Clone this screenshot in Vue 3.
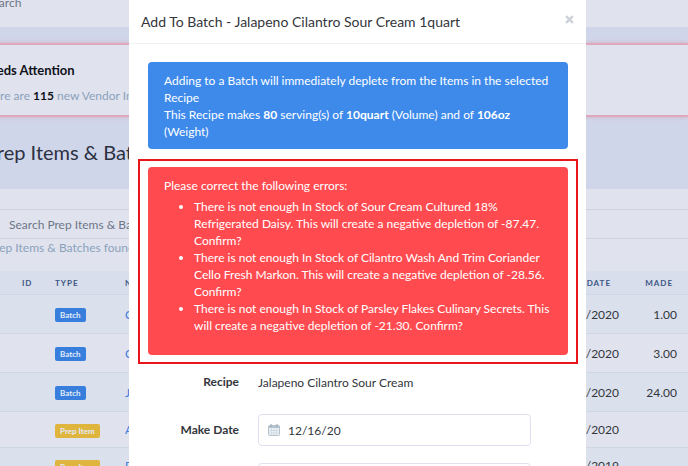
<script setup>
import { ref } from 'vue'

const search = ref('')
const makeDate = ref('12/16/20')
const quantity = ref('')

const rows = [
  { type: 'Batch', name: 'Cilantro', date: '12/14/2020', made: '1.00' },
  { type: 'Batch', name: 'Chili', date: '12/14/2020', made: '3.00' },
  { type: 'Batch', name: 'Jam', date: '12/14/2020', made: '24.00' },
  { type: 'Prep Item', name: 'Aioli', date: '12/17/2020', made: '' },
  { type: 'Prep Item', name: 'Rice', date: '12/17/2019', made: '' },
]

const errors = [
  'There is not enough In Stock of Sour Cream Cultured 18% Refrigerated Daisy. This will create a negative depletion of -87.47. Confirm?',
  'There is not enough In Stock of Cilantro Wash And Trim Coriander Cello Fresh Markon. This will create a negative depletion of -28.56. Confirm?',
  'There is not enough In Stock of Parsley Flakes Culinary Secrets. This will create a negative depletion of -21.30. Confirm?',
]
</script>

<template>
  <div class="screen">
    <main class="page">
      <div class="topbar">Search</div>
      <section class="attention">
        <h2>Needs Attention</h2>
        <p>There are <b>115</b> new Vendor Inv</p>
      </section>
      <h1>Prep Items &amp; Batches</h1>
      <section class="card">
        <div class="searchbar">
          <svg class="glass" viewBox="0 0 12 12" aria-hidden="true">
            <circle cx="5" cy="5" r="4" />
            <path d="M8 8l3 3" />
          </svg>
          <input v-model="search" type="text" aria-label="Search Prep Items" placeholder="Search Prep Items &amp; Batches" />
        </div>
        <p class="count">Prep Items &amp; Batches found</p>
        <table>
          <colgroup>
            <col class="c-id" />
            <col class="c-type" />
            <col />
            <col class="c-date" />
            <col class="c-made" />
          </colgroup>
          <thead>
            <tr>
              <th class="id">ID</th>
              <th>TYPE</th>
              <th>NAME</th>
              <th class="num">DATE</th>
              <th class="num">MADE</th>
            </tr>
          </thead>
          <tbody>
            <tr v-for="(row, i) in rows" :key="i" :class="{ item: row.type !== 'Batch' }">
              <td></td>
              <td><span class="badge">{{ row.type }}</span></td>
              <td><a href="#">{{ row.name }}</a></td>
              <td class="num">{{ row.date }}</td>
              <td class="num">{{ row.made }}</td>
            </tr>
          </tbody>
        </table>
      </section>
    </main>

    <div class="overlay">
      <div class="modal" role="dialog" aria-labelledby="title">
        <header>
          <h3 id="title">Add To Batch - Jalapeno Cilantro Sour Cream 1quart</h3>
          <button type="button" class="close" aria-label="Close">
            <svg viewBox="0 0 8 8"><path d="M1 1l6 6M7 1l-6 6" /></svg>
          </button>
        </header>
        <div class="body">
          <div class="alert info">
            Adding to a Batch will immediately deplete from the Items in the selected Recipe<br />
            This Recipe makes <b>80</b> serving(s) of <b>10quart</b> (Volume) and of <b>106oz</b> (Weight)
          </div>
          <div class="highlight">
            <div class="alert danger">
              Please correct the following errors:
              <ul>
                <li v-for="error in errors" :key="error">{{ error }}</li>
              </ul>
            </div>
          </div>
          <form @submit.prevent>
            <div class="field">
              <span class="label">Recipe</span>
              <span class="value">Jalapeno Cilantro Sour Cream</span>
            </div>
            <div class="field">
              <label class="label" for="make-date">Make Date</label>
              <div class="control">
                <svg class="calendar" viewBox="0 0 12 12" aria-hidden="true">
                  <rect x="0.5" y="1.5" width="11" height="10" rx="1" fill="#edf2f6" stroke="#b5c3ce" />
                  <path d="M0.5 2h11v2h-11z" fill="#b5c3ce" />
                  <path d="M3 0v3M9 0v3" stroke="#98a8b5" />
                  <path d="M1 6.5h10M1 9h10M3.5 4v7M6 4v7M8.5 4v7" stroke="#c9d4dc" stroke-width="0.7" />
                </svg>
                <input id="make-date" v-model="makeDate" type="text" />
              </div>
            </div>
            <div class="field">
              <label class="label" for="quantity"></label>
              <div class="control">
                <input id="quantity" v-model="quantity" type="text" aria-label="Quantity" />
              </div>
            </div>
          </form>
        </div>
      </div>
    </div>
  </div>
</template>

<style>
body {
  background: #d0d6e9;
}
</style>

<style scoped>
.screen {
  position: relative;
  height: 100vh;
  overflow: hidden;
  background: #d0d6e9;
  font-family: Lato, "Liberation Sans", sans-serif;
  color: #33363c;
}
.page {
  margin-left: -28px;
}
h1,
h2,
h3,
p {
  margin: 0;
  font-weight: 400;
}
.topbar {
  height: 27px;
  padding-left: 14px;
  box-sizing: border-box;
  background: #e0e3ee;
  font-size: 12px;
  line-height: 6px;
  color: #6d7688;
}
.attention {
  margin-top: 16px;
  padding: 15px 0 9px 8px;
  background: #e0e3ee;
  border-top: 2px solid #dea9bd;
  border-bottom: 2px solid #dea9bd;
  box-shadow: 0 0 4px #d5a9c0;
}
.attention h2 {
  font-size: 13px;
  line-height: 20px;
  font-weight: 700;
  color: #10121a;
}
.attention p {
  margin-top: 6px;
  font-size: 12px;
  line-height: 20px;
  color: #8ba1bb;
}
.attention b {
  color: #10121a;
}
h1 {
  padding: 21px 0 23px 13px;
  font-size: 20px;
  line-height: 28px;
  color: #2b3142;
}
.card {
  padding-top: 20px;
  background: #e0e3ee;
}
.searchbar {
  display: flex;
  align-items: center;
  gap: 8px;
  height: 28px;
  padding-left: 17px;
  border-top: 1px solid #ced2e3;
  border-bottom: 1px solid #ced2e3;
}
.glass {
  width: 12px;
  height: 12px;
  fill: none;
  stroke: #8b94a8;
}
.searchbar input {
  flex: 1;
  padding: 0;
  border: 0;
  background: none;
  font: inherit;
  font-size: 12px;
}
.searchbar input::placeholder {
  color: #6d7688;
  opacity: 1;
}
.count {
  padding: 0 0 14px 16px;
  font-size: 12px;
  line-height: 18px;
  color: #8ba1bb;
}
table {
  width: 100%;
  table-layout: fixed;
  border-collapse: collapse;
}
.c-id {
  width: 83px;
}
.c-type {
  width: 70px;
}
.c-date {
  width: 120px;
}
.c-made {
  width: 69px;
}
th,
td {
  padding: 0;
  text-align: left;
  border-bottom: 1px solid #d0d7e4;
}
th {
  height: 23px;
  background: #d8deeb;
  font-size: 8px;
  letter-spacing: 1px;
  color: #3d5684;
}
th.id {
  padding-left: 50px;
}
td {
  height: 38px;
  font-size: 12px;
  white-space: nowrap;
}
.item td {
  height: 35px;
}
tbody tr:nth-child(odd) {
  background: #dae1ed;
}
.num {
  text-align: right;
}
td.num {
  padding-right: 11px;
}
th.num {
  padding-right: 15px;
}
th.num:nth-child(4) {
  padding-right: 8px;
}
td.num:nth-child(4) {
  padding-right: 0;
}
td a {
  color: #3f7cdc;
  text-decoration: none;
}
.badge {
  display: inline-block;
  padding: 0 5px;
  border-radius: 2px;
  background: #387fdd;
  font-size: 8px;
  font-weight: 700;
  line-height: 14px;
  color: #e3ecfa;
}
.item .badge {
  background: #dfb53d;
}
.overlay {
  position: absolute;
  inset: 0;
  padding: 0 102px 0 129px;
}
.modal {
  min-height: 100%;
  background: #fff;
}
header {
  display: flex;
  align-items: center;
  justify-content: space-between;
  height: 43px;
  padding: 0 12px;
  border-bottom: 1px solid #edf2f7;
}
h3 {
  font-size: 14px;
  line-height: 20px;
}
.close {
  width: 9px;
  height: 9px;
  margin-bottom: 5px;
  padding: 0;
  border: 0;
  background: none;
}
.close svg {
  display: block;
  fill: none;
  stroke: #cdd0d8;
  stroke-width: 2;
}
.body {
  padding: 18px 18px 0 19px;
}
.alert {
  padding: 10px 16px 9px;
  border-radius: 4px;
  font-size: 12px;
  line-height: 17px;
  color: #fff;
}
.info {
  background: #3d8aeb;
}
.danger {
  padding-bottom: 21px;
  background: #ff4b50;
}
.highlight {
  margin: 10px -10px 0;
  padding: 6px 8px 7px;
  border: 2px solid #e8151b;
}
ul {
  margin: 4px 0 0;
  padding-left: 30px;
}
.field {
  display: flex;
  align-items: center;
  gap: 19px;
  margin-bottom: 17px;
  padding-right: 37px;
}
.field:first-child {
  margin: 8px 0 22px;
}
.label {
  width: 91px;
  font-size: 12px;
  line-height: 20px;
  font-weight: 700;
  text-align: right;
}
.value {
  font-size: 12px;
}
.control {
  flex: 1;
  display: flex;
  align-items: center;
  gap: 8px;
  height: 30px;
  padding: 0 9px;
  border: 1px solid #dfe1f0;
  border-radius: 4px;
}
.calendar {
  width: 12px;
  height: 12px;
}
.control input {
  flex: 1;
  min-width: 0;
  padding: 0;
  border: 0;
  outline: 0;
  background: none;
  font: inherit;
  font-size: 12px;
  color: inherit;
}
</style>
